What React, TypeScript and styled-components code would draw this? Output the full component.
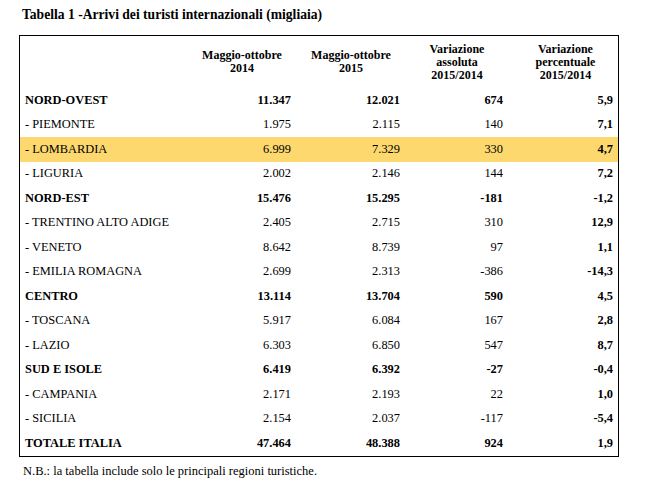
import React from "react";
import styled, { createGlobalStyle } from "styled-components";

const GlobalStyle = createGlobalStyle`
  body {
    margin: 0;
    background: #ffffff;
    color: #000000;
  }
`;

const serif = `"Liberation Serif", "Times New Roman", Tinos, "DejaVu Serif", serif`;

const Page = styled.div`
  padding: 7px 0 0 19px;
  width: 600px;
  font-family: ${serif};
  color: #000;
`;

const Title = styled.h1`
  margin: 0 0 12px 3px;
  font-family: ${serif};
  font-size: 13.6px;
  line-height: 16px;
  font-weight: bold;
`;

const Tabella = styled.div`
  border: 1px solid #000;
  display: grid;
  grid-template-columns: 163px 118px 100px 112px 105px;
  grid-template-rows: 52px;
  grid-auto-rows: 24.5px;
`;

const Intestazione = styled.div`
  display: flex;
  align-items: center;
  justify-content: center;
  text-align: center;
  font-family: ${serif};
  font-size: 12px;
  line-height: 13px;
  font-weight: bold;
  white-space: nowrap;
`;

const Riga = styled.div<{ $evidenziata?: boolean }>`
  display: contents;

  & > div {
    background: ${(p) => (p.$evidenziata ? "#fcd86e" : "transparent")};
  }
`;

const Etichetta = styled.div<{ $grassetto?: boolean }>`
  display: flex;
  align-items: center;
  padding-left: 5px;
  font-family: ${serif};
  font-size: 12.4px;
  font-weight: ${(p) => (p.$grassetto ? "bold" : "normal")};
  white-space: nowrap;
`;

const Valore = styled.div<{ $grassetto?: boolean; $destra: number }>`
  display: flex;
  align-items: center;
  justify-content: flex-end;
  padding-right: ${(p) => p.$destra}px;
  font-family: ${serif};
  font-size: 12.4px;
  font-weight: ${(p) => (p.$grassetto ? "bold" : "normal")};
`;

const Nota = styled.p`
  margin: 7px 0 0 4px;
  font-family: ${serif};
  font-size: 12.5px;
  line-height: 15px;
`;

type Regione = {
  nome: string;
  valori: [string, string, string, string];
  totale?: boolean;
  evidenziata?: boolean;
};

const dati: Regione[] = [
  { nome: "NORD-OVEST", valori: ["11.347", "12.021", "674", "5,9"], totale: true },
  { nome: "- PIEMONTE", valori: ["1.975", "2.115", "140", "7,1"] },
  { nome: "- LOMBARDIA", valori: ["6.999", "7.329", "330", "4,7"], evidenziata: true },
  { nome: "- LIGURIA", valori: ["2.002", "2.146", "144", "7,2"] },
  { nome: "NORD-EST", valori: ["15.476", "15.295", "-181", "-1,2"], totale: true },
  { nome: "- TRENTINO ALTO ADIGE", valori: ["2.405", "2.715", "310", "12,9"] },
  { nome: "- VENETO", valori: ["8.642", "8.739", "97", "1,1"] },
  { nome: "- EMILIA ROMAGNA", valori: ["2.699", "2.313", "-386", "-14,3"] },
  { nome: "CENTRO", valori: ["13.114", "13.704", "590", "4,5"], totale: true },
  { nome: "- TOSCANA", valori: ["5.917", "6.084", "167", "2,8"] },
  { nome: "- LAZIO", valori: ["6.303", "6.850", "547", "8,7"] },
  { nome: "SUD E ISOLE", valori: ["6.419", "6.392", "-27", "-0,4"], totale: true },
  { nome: "- CAMPANIA", valori: ["2.171", "2.193", "22", "1,0"] },
  { nome: "- SICILIA", valori: ["2.154", "2.037", "-117", "-5,4"] },
  { nome: "TOTALE ITALIA", valori: ["47.464", "48.388", "924", "1,9"], totale: true },
];

// spazio a destra dei numeri, colonna per colonna
const margini = [10, 1, 10, 5];

const App = () => {
  return (
    <Page>
      <GlobalStyle />
      <Title>Tabella 1 -Arrivi dei turisti internazionali (migliaia)</Title>
      <Tabella>
        <Intestazione />
        <Intestazione>
          Maggio-ottobre
          <br />
          2014
        </Intestazione>
        <Intestazione>
          Maggio-ottobre
          <br />
          2015
        </Intestazione>
        <Intestazione>
          Variazione
          <br />
          assoluta
          <br />
          2015/2014
        </Intestazione>
        <Intestazione>
          Variazione
          <br />
          percentuale
          <br />
          2015/2014
        </Intestazione>
        {dati.map((r) => (
          <Riga key={r.nome} $evidenziata={r.evidenziata}>
            <Etichetta $grassetto={r.totale}>{r.nome}</Etichetta>
            {r.valori.map((v, i) => (
              <Valore key={i} $destra={margini[i]} $grassetto={r.totale || i === 3}>
                {v}
              </Valore>
            ))}
          </Riga>
        ))}
      </Tabella>
      <Nota>N.B.: la tabella include solo le principali regioni turistiche.</Nota>
    </Page>
  );
};

export default App;
